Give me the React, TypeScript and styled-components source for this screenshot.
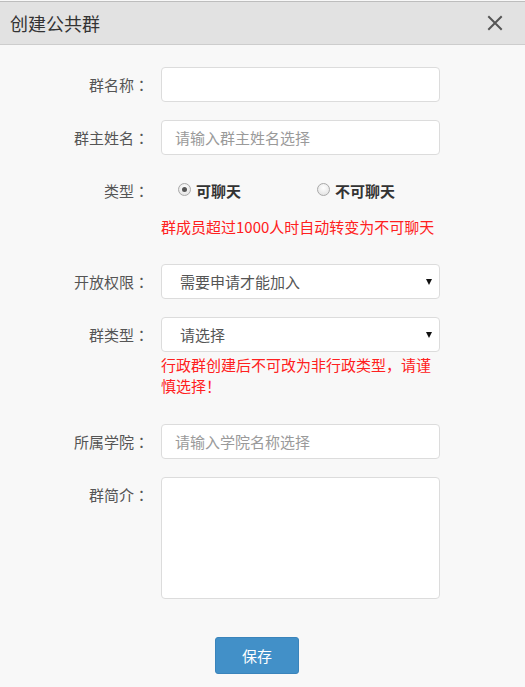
import styled, { createGlobalStyle } from "styled-components";

const GlobalStyle = createGlobalStyle`
    html, body {
        margin: 0;
        padding: 0;
        background: #ffffff;
    }
    body {
        font-family: "Noto Sans CJK SC", "Noto Sans", sans-serif;
    }
`

const Dialog = styled.div`
    width: 525px;
    min-height: 687px;
    padding-top: 1px;
    box-sizing: border-box;
    background: #f8f8f8;
    display: flex;
    flex-direction: column;
`

const Header = styled.header`
    height: 42px;
    border-top: 1px solid #bdbdbd;
    border-bottom: 1px solid #cdcdcd;
    background: #e2e2e2;
    display: flex;
    align-items: center;
    justify-content: space-between;
    padding: 0 21px 0 10px;
`

const Title = styled.h1`
    margin: 0;
    font-size: 18px;
    font-weight: 400;
    line-height: 24px;
    color: #333;
`

const CloseButton = styled.button`
    border: 0;
    background: transparent;
    padding: 0;
    width: 18px;
    height: 18px;
    display: flex;
    align-items: center;
    justify-content: center;
    cursor: pointer;
`

const Form = styled.form`
    display: flex;
    flex-direction: column;
    padding-top: 22px;
`

const Row = styled.div<{ $gap?: number; $top?: boolean }>`
    display: grid;
    grid-template-columns: 161px 279px;
    align-items: ${({ $top }) => ($top ? "start" : "center")};
    margin-bottom: ${({ $gap }) => $gap ?? 18}px;
`

const Label = styled.label<{ $pad?: number }>`
    text-align: right;
    padding-right: 12px;
    padding-top: ${({ $pad }) => $pad ?? 0}px;
    font-size: 15px;
    line-height: 20px;
    color: #555;
`

// centred full-width colon, as in the original font
const Punct = styled.span`
    font-family: "Noto Sans CJK TC", "Noto Sans CJK SC", sans-serif;
`

const Field = styled.input`
    height: 35px;
    box-sizing: border-box;
    border: 1px solid #dcdcdc;
    border-radius: 4px;
    background: #fff;
    padding: 0 13px;
    font-family: inherit;
    font-size: 15px;
    color: #555;
    outline: none;

    &::placeholder {
        color: #9a9a9a;
    }
`

const SelectWrap = styled.div`
    position: relative;
    height: 35px;
`

const Select = styled.select`
    appearance: none;
    width: 100%;
    height: 35px;
    box-sizing: border-box;
    border: 1px solid #dcdcdc;
    border-radius: 4px;
    background: #fff;
    padding: 0 18px;
    font-family: inherit;
    font-size: 15px;
    color: #555;
    outline: none;
`

const Caret = styled.span`
    position: absolute;
    right: 8px;
    top: 15px;
    width: 0;
    height: 0;
    border-left: 3.5px solid transparent;
    border-right: 3.5px solid transparent;
    border-top: 6px solid #111;
    pointer-events: none;
`

const Radios = styled.div`
    display: flex;
    align-items: center;
    height: 35px;
    padding-left: 17px;
`

const RadioOption = styled.label<{ $width?: number }>`
    flex: none;
    display: flex;
    align-items: center;
    gap: 5px;
    width: ${({ $width }) => ($width ? `${$width}px` : "auto")};
    font-size: 15px;
    font-weight: 700;
    line-height: 20px;
    color: #333;
`

const RadioDot = styled.span<{ $checked?: boolean }>`
    width: 11px;
    height: 11px;
    border-radius: 50%;
    border: 1px solid #a9a9a9;
    background: radial-gradient(circle at 50% 35%, #ffffff 0%, #dedede 100%);
    display: flex;
    align-items: center;
    justify-content: center;
    margin-top: -3px;

    &::after {
        content: "";
        width: 5px;
        height: 5px;
        border-radius: 50%;
        background: #555;
        display: ${({ $checked }) => ($checked ? "block" : "none")};
    }
`

const Note = styled.p<{ $top?: number }>`
    grid-column: 2;
    margin: ${({ $top }) => $top ?? 0}px 0 0;
    font-size: 15px;
    line-height: 21px;
    color: #ff2020;
`

const TextArea = styled.textarea`
    height: 122px;
    box-sizing: border-box;
    border: 1px solid #dcdcdc;
    border-radius: 4px;
    background: #fff;
    resize: none;
    outline: none;
    font-family: inherit;
    font-size: 15px;
`

const Actions = styled.div`
    padding: 20px 0 0 215px;
`

const SaveButton = styled.button`
    width: 84px;
    height: 37px;
    border: 1px solid #3a84bb;
    border-radius: 3px;
    background: #4290c8;
    color: #fff;
    font-family: inherit;
    font-size: 15px;
    cursor: pointer;
`

const App = () => {
    return (
        <>
            <GlobalStyle />
            <Dialog>
                <Header>
                    <Title>创建公共群</Title>
                    <CloseButton type="button" aria-label="关闭">
                        <svg width="16" height="16" viewBox="0 0 16 16">
                            <path d="M2 2 L14 14 M14 2 L2 14" stroke="#555" strokeWidth="2" strokeLinecap="square" />
                        </svg>
                    </CloseButton>
                </Header>
                <Form onSubmit={(e) => e.preventDefault()}>
                    <Row>
                        <Label>群名称<Punct>：</Punct></Label>
                        <Field />
                    </Row>
                    <Row>
                        <Label>群主姓名<Punct>：</Punct></Label>
                        <Field placeholder="请输入群主姓名选择" />
                    </Row>
                    <Row $gap={27}>
                        <Label>类型<Punct>：</Punct></Label>
                        <Radios>
                            <RadioOption $width={139}>
                                <RadioDot $checked />
                                可聊天
                            </RadioOption>
                            <RadioOption>
                                <RadioDot />
                                不可聊天
                            </RadioOption>
                        </Radios>
                        <Note $top={8}>群成员超过1000人时自动转变为不可聊天</Note>
                    </Row>
                    <Row>
                        <Label>开放权限<Punct>：</Punct></Label>
                        <SelectWrap>
                            <Select defaultValue="apply">
                                <option value="apply">需要申请才能加入</option>
                            </Select>
                            <Caret />
                        </SelectWrap>
                    </Row>
                    <Row $gap={28}>
                        <Label>群类型<Punct>：</Punct></Label>
                        <SelectWrap>
                            <Select defaultValue="">
                                <option value="">请选择</option>
                            </Select>
                            <Caret />
                        </SelectWrap>
                        <Note $top={2}>行政群创建后不可改为非行政类型，请谨慎选择！</Note>
                    </Row>
                    <Row>
                        <Label>所属学院<Punct>：</Punct></Label>
                        <Field placeholder="请输入学院名称选择" />
                    </Row>
                    <Row $top>
                        <Label $pad={8}>群简介<Punct>：</Punct></Label>
                        <TextArea />
                    </Row>
                    <Actions>
                        <SaveButton type="submit">保存</SaveButton>
                    </Actions>
                </Form>
            </Dialog>
        </>
    )
};

export default App;
